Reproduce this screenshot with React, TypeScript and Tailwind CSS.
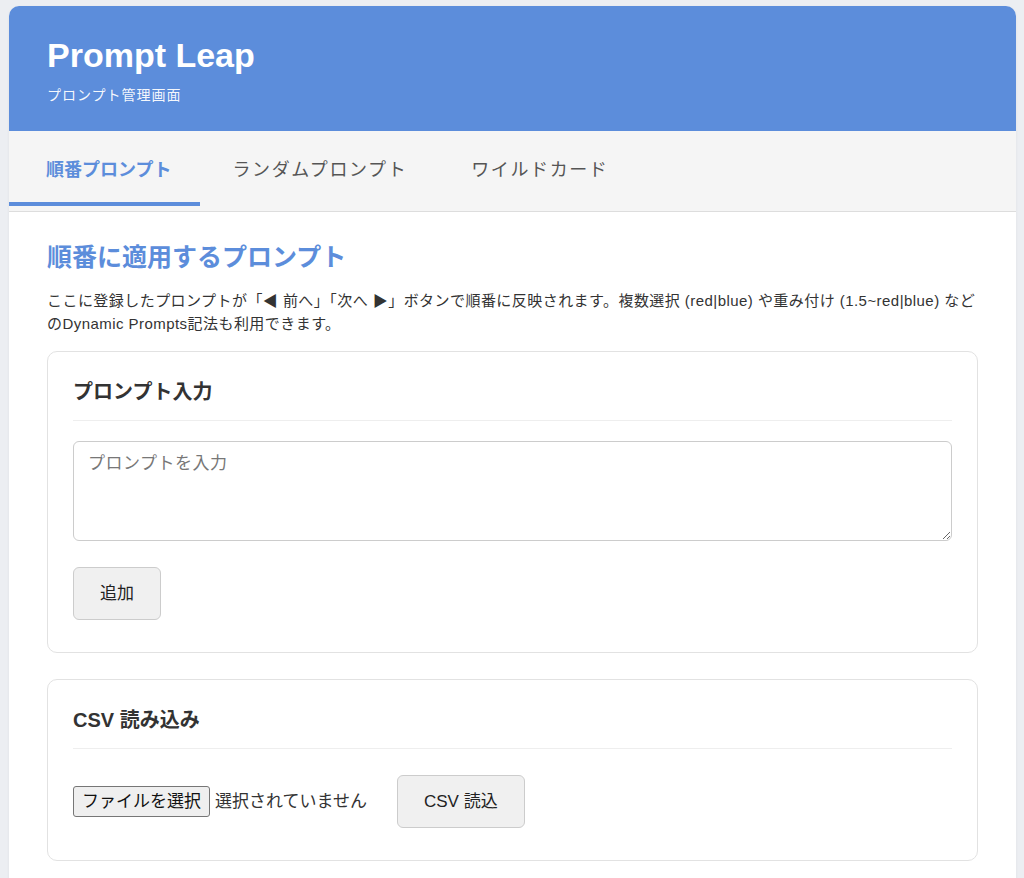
import { useState } from "react";

type TabKey = "sequential" | "random" | "wildcard";

const tabs: { key: TabKey; label: string }[] = [
  { key: "sequential", label: "順番プロンプト" },
  { key: "random", label: "ランダムプロンプト" },
  { key: "wildcard", label: "ワイルドカード" },
];

const btnGray =
  "h-[53px] rounded-md border border-[#cccccc] bg-[#f0f0f0] px-[26px] text-[17px] text-[#222] hover:bg-[#e6e6e6]";

function Card({ title, children }: { title: string; children: React.ReactNode }) {
  return (
    <section className="rounded-[10px] border border-[#e2e2e2] bg-white px-[25px] pt-[27px] pb-[32px]">
      <h3 className="border-b border-[#eeeeee] pb-[14px] text-[20px] leading-[27px] font-bold text-[#333]">
        {title}
      </h3>
      {children}
    </section>
  );
}

export default function App() {
  const [active, setActive] = useState<TabKey>("sequential");
  const [prompt, setPrompt] = useState("");

  return (
    <div
      className="min-h-[878px] bg-[#eceef2] pt-[6px] pr-[8px] pl-[9px]"
      style={{ fontFamily: '"Liberation Sans", "Noto Sans CJK JP", sans-serif' }}
    >
      <div className="overflow-hidden rounded-t-[10px] bg-white shadow-[0_1px_3px_rgba(0,0,0,0.06)]">
        <header className="bg-[#5c8ddb] px-[38px] pt-[29px] pb-[26px] text-white">
          <h1 className="text-[34px] leading-[40px] font-bold">Prompt Leap</h1>
          <p className="mt-[10px] text-[14px] leading-[20px] tracking-[1px] text-white/95">
            プロンプト管理画面
          </p>
        </header>

        <nav className="flex border-b border-[#dddddd] bg-[#f5f5f5] pb-[5px]">
          {tabs.map((tab) => {
            const isActive = tab.key === active;
            return (
              <button
                key={tab.key}
                type="button"
                onClick={() => setActive(tab.key)}
                className={
                  isActive
                    ? "border-b-4 border-[#5c8ddb] pt-[26px] pr-[29px] pb-[18px] pl-[37px] text-[18px] leading-[27px] font-bold text-[#5c8ddb]"
                    : "border-b-4 border-transparent px-[32px] pt-[26px] pb-[18px] text-[18px] leading-[27px] tracking-[1.6px] text-[#555]"
                }
              >
                {tab.label}
              </button>
            );
          })}
        </nav>

        <main className="px-[38px] pt-[29px] pb-[20px]">
          <h2 className="text-[25px] leading-[32px] font-bold text-[#5c8ddb]">
            順番に適用するプロンプト
          </h2>
          <p className="mt-[16px] text-[15px] leading-[23px] tracking-[0.45px] text-[#333]">
            ここに登録したプロンプトが「◀ 前へ」「次へ ▶」ボタンで順番に反映されます。複数選択 (red|blue) や重み付け
            (1.5~red|blue) などのDynamic Prompts記法も利用できます。
          </p>

          <div className="mt-[16px] flex flex-col gap-[26px]">
            <Card title="プロンプト入力">
              <textarea
                value={prompt}
                onChange={(e) => setPrompt(e.target.value)}
                placeholder="プロンプトを入力"
                className="mt-[20px] block h-[100px] w-full rounded-md border border-[#cccccc] px-[14px] py-[10px] text-[17px] leading-[24px] tracking-[0.5px] text-[#333] placeholder:text-[#777] focus:outline-none"
              />
              <button type="button" className={`mt-[26px] ${btnGray}`}>
                追加
              </button>
            </Card>

            <Card title="CSV 読み込み">
              <div className="mt-[26px] flex items-center">
                <label className="flex cursor-pointer items-center">
                  <span className="rounded-[3px] border border-[#767676] bg-[#efefef] px-[8px] py-[2px] text-[17px] leading-[25px] text-[#111]">
                    ファイルを選択
                  </span>
                  <span className="ml-[5px] text-[17px] text-[#333]">選択されていません</span>
                  <input type="file" accept=".csv" className="hidden" />
                </label>
                <button type="button" className={`ml-[30px] ${btnGray}`}>
                  CSV 読込
                </button>
              </div>
            </Card>
          </div>
        </main>
      </div>
    </div>
  );
}
